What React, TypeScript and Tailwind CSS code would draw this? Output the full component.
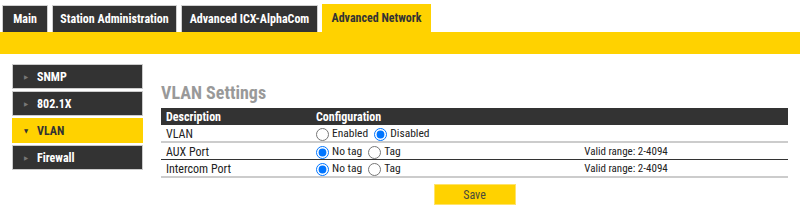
import React from "react";

const font = { fontFamily: '"Liberation Sans Narrow", "Roboto Condensed", "DejaVu Sans Condensed", Roboto, sans-serif' };

const tabs = [
  { label: "Main", w: "w-[46px]" },
  { label: "Station Administration", w: "w-[125px]" },
  { label: "Advanced ICX-AlphaCom", w: "w-[137px]" },
];

const menu = ["SNMP", "802.1X", "VLAN", "Firewall"];

const Radio = ({ name, label, checked }: { name: string; label: string; checked?: boolean }) => (
  <label className="flex items-center gap-[3px] mr-[6px] text-[11.5px]">
    <input type="radio" name={name} defaultChecked={checked} className="m-0 w-[13px] h-[13px]" />
    <span>{label}</span>
  </label>
);

export default function App() {
  return (
    <div className="w-[800px] h-[222px] bg-white text-[#222] overflow-hidden" style={font}>
      {/* top tabs */}
      <div className="flex items-end gap-[4px] pl-[2px] pt-[4px] h-[32px]">
        {tabs.map((t) => (
          <div
            key={t.label}
            className={`${t.w} h-[27px] flex items-center justify-center bg-[#333] border border-[#d0d0d0] border-b-0 text-white text-[12px] font-bold`}
          >
            {t.label}
          </div>
        ))}
        <div className="w-[109px] h-[28px] flex items-center justify-center bg-[#ffd200] text-[#333] text-[12px] font-bold">
          Advanced Network
        </div>
      </div>
      <div className="h-[22px] bg-[#ffd200]" />

      <div className="flex pt-[10px]">
        {/* side menu */}
        <div className="ml-[12px] w-[131px] flex flex-col gap-[2px]">
          {menu.map((m) => {
            const active = m === "VLAN";
            return (
              <div
                key={m}
                className={`h-[25px] flex items-center pl-[11px] text-[12px] font-bold border ${
                  active ? "bg-[#ffd200] border-[#ffd200] text-[#333]" : "bg-[#333] border-[#ccc] text-white"
                }`}
              >
                <span className={`w-[13px] text-[6px] ${active ? "text-[#333]" : "text-[#777]"}`}>{active ? "▼" : "▶"}</span>
                <span>{m}</span>
              </div>
            );
          })}
        </div>

        {/* content */}
        <div className="ml-[18px] w-[627px] flex flex-col">
          <h2 className="text-[18px] font-bold text-[#999] leading-[22px] mt-[18px] mb-[4px]">VLAN Settings</h2>
          <div className="text-[12px]">
            <div className="grid grid-cols-[155px_148px_1fr] h-[17px] items-center bg-[#333] text-white font-bold">
              <div className="pl-[5px]">Description</div>
              <div>Configuration</div>
              <div />
            </div>
            <div className="grid grid-cols-[155px_148px_1fr] h-[18px] items-center border-b-2 border-[#ccc]">
              <div className="pl-[5px]">VLAN</div>
              <div className="flex items-center">
                <Radio name="vlan" label="Enabled" />
                <Radio name="vlan" label="Disabled" checked />
              </div>
              <div />
            </div>
            <div className="grid grid-cols-[155px_148px_1fr] h-[17px] items-center border-b border-[#333]">
              <div className="pl-[5px]">AUX Port</div>
              <div className="flex items-center">
                <Radio name="aux" label="No tag" checked />
                <Radio name="aux" label="Tag" />
              </div>
              <div className="text-center text-[11px]">Valid range: 2-4094</div>
            </div>
            <div className="grid grid-cols-[155px_148px_1fr] h-[18px] items-center border-b-2 border-[#ccc]">
              <div className="pl-[5px]">Intercom Port</div>
              <div className="flex items-center">
                <Radio name="icom" label="No tag" checked />
                <Radio name="icom" label="Tag" />
              </div>
              <div className="text-center text-[11px]">Valid range: 2-4094</div>
            </div>
          </div>
          <div className="flex justify-center mt-[6px]">
            <button className="w-[82px] h-[21px] bg-[#ffd200] border border-[#ffe36a] text-[#4a4a3a] text-[12px]">
              Save
            </button>
          </div>
        </div>
      </div>
    </div>
  );
}
